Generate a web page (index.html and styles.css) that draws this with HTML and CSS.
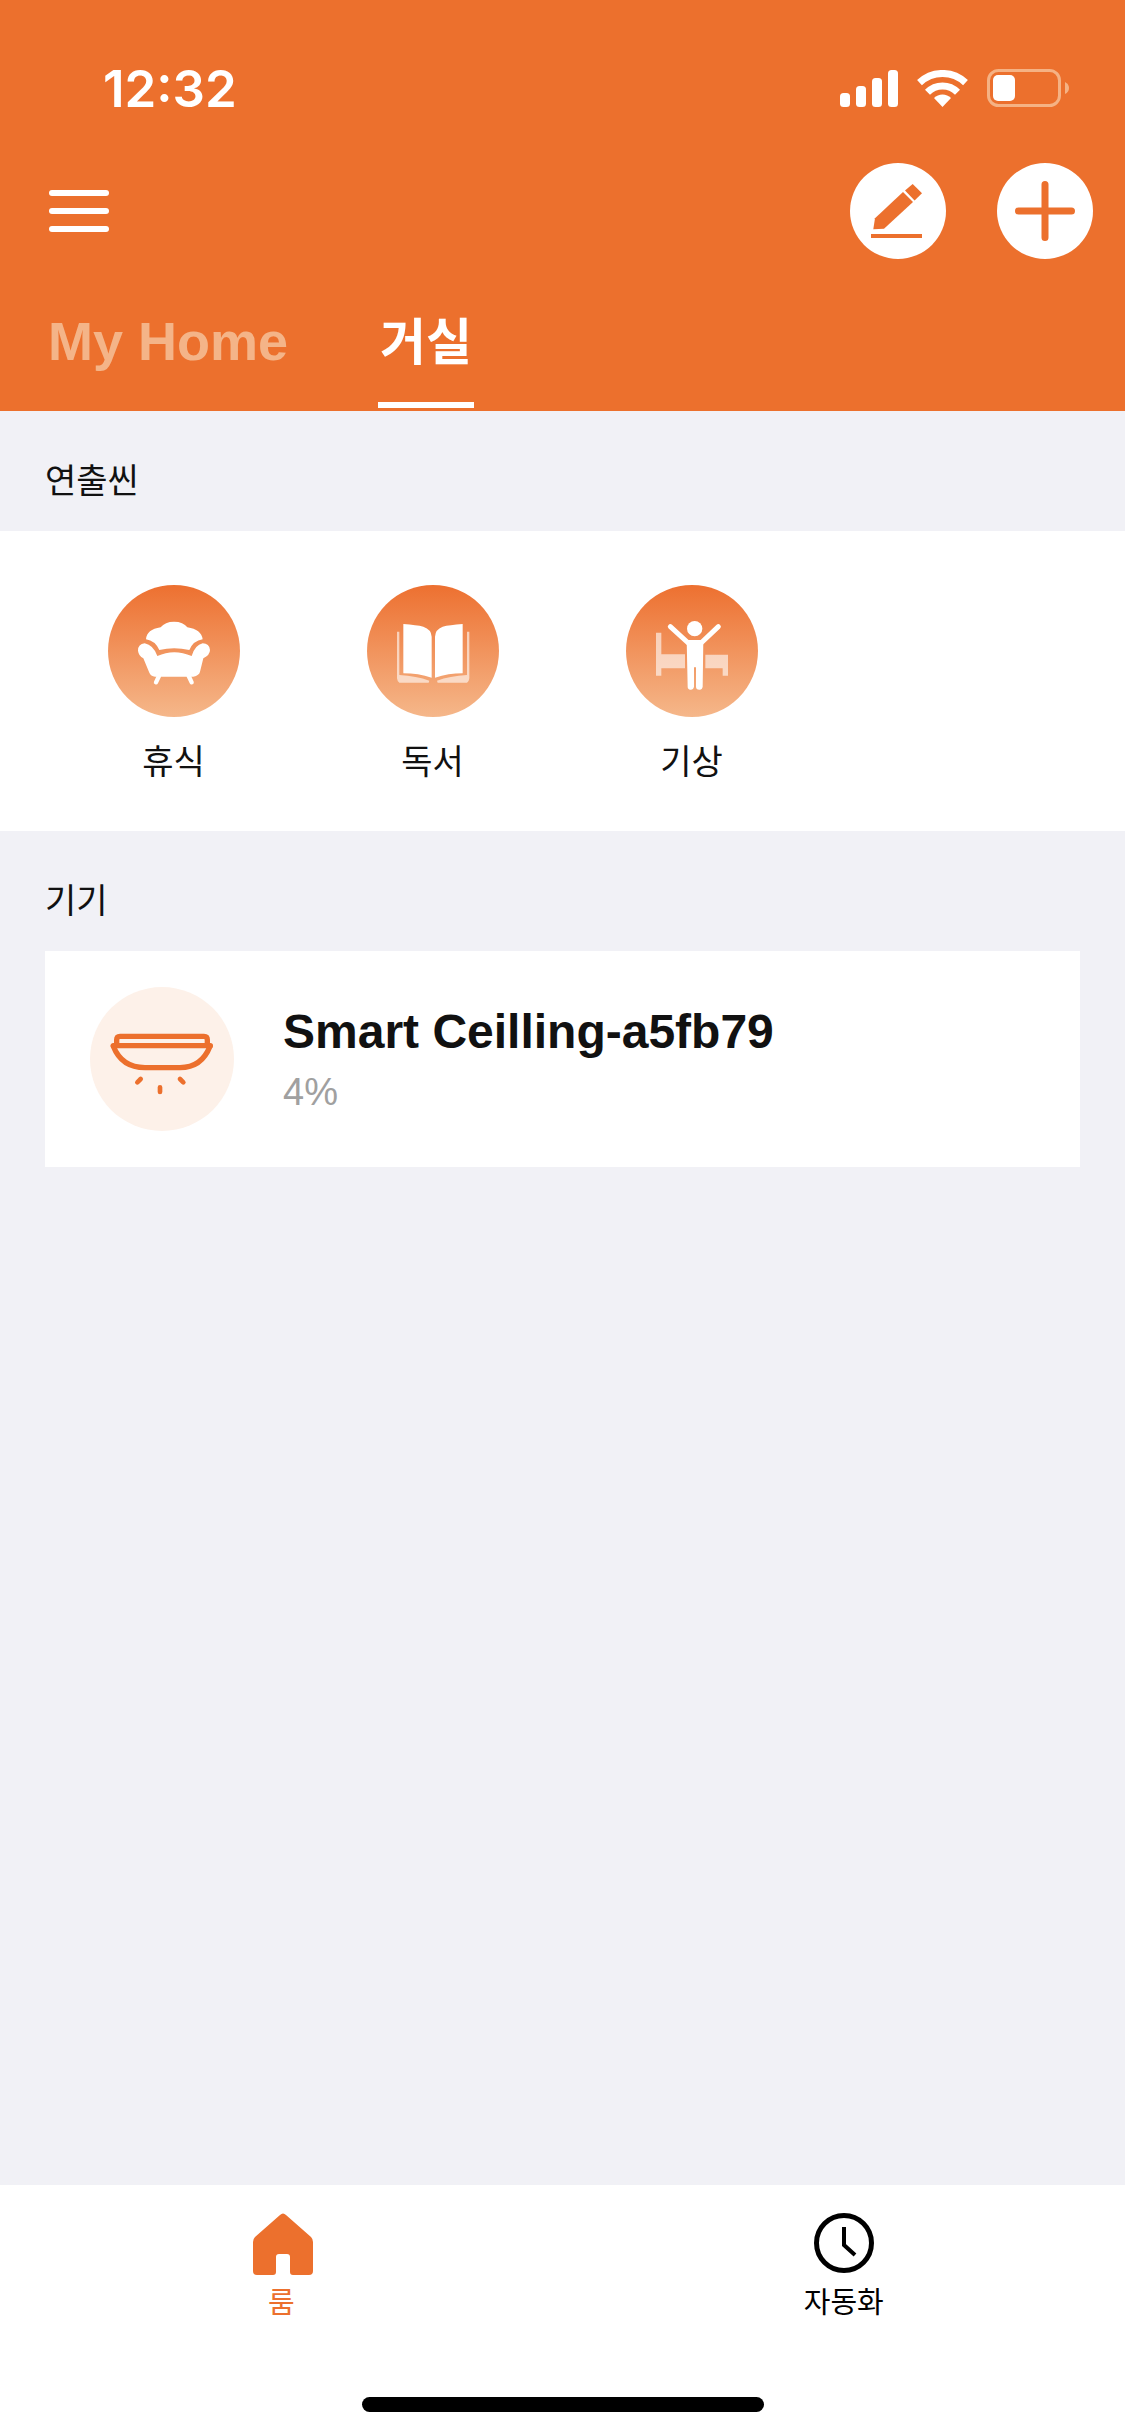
FILE: index.html
```html
<!DOCTYPE html>
<html lang="ko">
<head>
  <meta charset="UTF-8">
  <meta name="viewport" content="width=device-width, initial-scale=1.0">
  <title>거실</title>
  <link rel="stylesheet" href="styles.css">
</head>
<body>

  <div class="page">
    <header class="header">
      <div class="status">
        <span class="time">12:32</span>
        <div class="status-icons">
          <svg width="58" height="37" viewBox="0 0 58 37" fill="#fff">
            <rect x="0" y="23" width="10" height="14" rx="3.5"/>
            <rect x="16" y="16" width="10" height="21" rx="3.5"/>
            <rect x="32" y="8" width="10" height="29" rx="3.5"/>
            <rect x="48" y="0" width="10" height="37" rx="3.5"/>
          </svg>
          <svg width="51" height="37" viewBox="0 0 51 37">
            <path d="M2.5 12.6A33.5 33.5 0 0 1 48.5 12.6" fill="none" stroke="#fff" stroke-width="7"/>
            <path d="M10.5 22.3A21 21 0 0 1 40.5 22.3" fill="none" stroke="#fff" stroke-width="7"/>
            <path d="M25.5 37L17 28A12 12 0 0 1 34 28Z" fill="#fff"/>
          </svg>
          <svg width="82" height="38" viewBox="0 0 82 38">
            <rect x="1.5" y="1.5" width="71" height="35" rx="10" fill="none" stroke="#f5b284" stroke-width="3"/>
            <rect x="6" y="6" width="22" height="26" rx="5" fill="#fff"/>
            <path d="M78 13Q82 15 82 19Q82 23 78 25Z" fill="#f5b284"/>
          </svg>
        </div>
      </div>

      <div class="toolbar">
        <div class="menu">
          <span></span>
          <span></span>
          <span></span>
        </div>
        <div class="actions">
          <div class="round-btn">
            <svg width="96" height="96" viewBox="0 0 96 96" fill="#ec702d">
              <path d="M23.3 66.3L25 55.3L53 29L63 39L34 65.7Z"/>
              <path d="M55 27.5L62.7 21L72 30.3L64.6 37.5Z"/>
              <rect x="21" y="71" width="51" height="4"/>
            </svg>
          </div>
          <div class="round-btn">
            <svg width="96" height="96" viewBox="0 0 96 96" stroke="#ec702d" stroke-width="7" stroke-linecap="round">
              <path d="M48 21.5V74.5M21.5 48H74.5"/>
            </svg>
          </div>
        </div>
      </div>

      <nav class="tabs">
        <a class="tab">My Home</a>
        <a class="tab active">거실</a>
      </nav>
    </header>

    <main class="content">
      <h2 class="section-title">연출씬</h2>
      <section class="scenes">
        <div class="scene">
          <div class="scene-icon">
            <svg width="132" height="132" viewBox="24 15 396 396">
              <path fill="#fff" d="M138 178Q140 148 182 142Q195 125 222 125Q250 125 262 142Q304 148 308 178Q280 182 268 210Q222 200 178 210Q165 182 138 178Z"/>
              <path fill="#fff" d="M134 190Q114 192 114 212Q116 228 130 235L148 278Q152 288 165 290L280 290Q298 286 300 275L310 235Q330 225 330 210Q328 190 308 190Q285 195 275 228Q222 205 172 228Q160 195 134 190Z"/>
              <path fill="none" stroke="#fff" stroke-width="13" stroke-linecap="round" d="M177 288L168 307M266 288L275 307"/>
            </svg>
          </div>
          <span class="scene-name">휴식</span>
        </div>
        <div class="scene">
          <div class="scene-icon">
            <svg width="132" height="132" viewBox="21 15 396 396" fill="#fff">
              <path d="M130 132Q170 135 190 140Q214 148 215 170L215 293Q175 280 130 280Z"/>
              <path d="M308 132Q268 135 248 140Q226 148 225 170L225 293Q265 280 308 280Z"/>
              <path opacity="0.6" d="M111 155H118V285Q170 288 208 302L206 308H118Q112 305 111 295Z"/>
              <path opacity="0.6" d="M328 155H321V285Q269 288 231 302L233 308H321Q327 305 328 295Z"/>
            </svg>
          </div>
          <span class="scene-name">독서</span>
        </div>
        <div class="scene">
          <div class="scene-icon">
            <svg width="132" height="132" viewBox="18 15 396 396" fill="#fff">
              <path opacity="0.6" d="M108 158H124V223H195V265H124V287H108Z"/>
              <path opacity="0.6" d="M256 224H324V287H308V265H256Z"/>
              <circle cx="224" cy="146" r="23"/>
              <path fill="none" stroke="#fff" stroke-width="15" stroke-linecap="round" d="M151 140L208 192M295 140L240 192"/>
              <path d="M200 180H250L248 320Q246 330 238 329Q228 329 228 320V262H222V320Q220 330 211 329Q203 328 203 320Z"/>
            </svg>
          </div>
          <span class="scene-name">기상</span>
        </div>
      </section>

      <h2 class="section-title">기기</h2>
      <section class="device">
        <div class="device-icon">
          <svg width="144" height="144" viewBox="30 20 432 432" fill="none" stroke="#ec702d" stroke-linecap="round">
            <path stroke-width="16" d="M110 195V178Q110 168 120 168H372Q382 168 382 178V195"/>
            <path stroke-width="16" d="M100 196H391"/>
            <path stroke-width="16" d="M100 198Q125 262 195 262H300Q365 262 390 198"/>
            <path stroke-width="14" d="M172 306L182 296M300 296L310 306M240 321V335"/>
          </svg>
        </div>
        <div class="device-info">
          <div class="device-name">Smart Ceilling-a5fb79</div>
          <div class="device-value">4%</div>
        </div>
      </section>
    </main>

    <footer class="tabbar">
      <div class="tabbar-items">
        <div class="tabbar-item selected">
          <svg class="home-icon" width="60" height="62" viewBox="0 0 60 62" fill="#ec702d">
            <path d="M27 2Q30 -1 33 2L58 24Q60 26 60 29V58Q60 62 56 62H40Q37 62 37 59V44Q37 41 34 41H26Q23 41 23 44V59Q23 62 20 62H4Q0 62 0 58V29Q0 26 2 24Z"/>
          </svg>
          <span>룸</span>
        </div>
        <div class="tabbar-item">
          <svg width="60" height="60" viewBox="0 0 60 60" fill="none" stroke="#000">
            <circle cx="30" cy="30" r="27.5" stroke-width="5"/>
            <path stroke-width="4" d="M30 14V32L41 42"/>
          </svg>
          <span>자동화</span>
        </div>
      </div>
      <div class="home-bar"></div>
    </footer>
  </div>

</body>
</html>
```

FILE: styles.css
```css
* {
  box-sizing: border-box;
}
body {
  margin: 0;
  font-family: "Liberation Sans", "Noto Sans CJK KR", sans-serif;
  color: #111;
}
.page {
  width: 1125px;
  height: 2436px;
  display: flex;
  flex-direction: column;
  background-color: #f1f1f6;
}

/* header */
.header {
  height: 411px;
  padding-top: 60px;
  display: flex;
  flex-direction: column;
  background-color: #ec702d;
}
.status {
  height: 56px;
  padding: 0 56px 0 103px;
  display: flex;
  align-items: center;
  justify-content: space-between;
}
.time {
  font-family: Inter, sans-serif;
  font-size: 51px;
  font-weight: 600;
  color: #fff;
}
.status-icons {
  display: flex;
  align-items: center;
  gap: 19px;
}
.toolbar {
  height: 96px;
  margin-top: 47px;
  padding: 0 32px 0 49px;
  display: flex;
  align-items: center;
  justify-content: space-between;
}
.menu {
  width: 60px;
  display: flex;
  flex-direction: column;
  gap: 12px;
}
.menu span {
  height: 6px;
  border-radius: 3px;
  background-color: #fff;
}
.actions {
  display: flex;
  gap: 51px;
}
.round-btn {
  width: 96px;
  height: 96px;
  border-radius: 50%;
  background-color: #fff;
}
.round-btn svg {
  display: block;
}
.tabs {
  margin-top: auto;
  padding: 0 0 3px 48px;
  display: flex;
  gap: 90px;
}
.tab {
  height: 94px;
  font-size: 54px;
  font-weight: 700;
  line-height: 55px;
  color: #f4b488;
}
.tab.active {
  width: 96px;
  text-align: center;
  font-size: 50px;
  line-height: 58px;
  color: #fff;
  border-bottom: 6px solid #fff;
}

/* content */
.content {
  flex: 1;
}
.section-title {
  height: 120px;
  margin: 0;
  padding: 47px 0 0 45px;
  font-size: 34px;
  font-weight: 400;
  line-height: 46px;
}
.scenes {
  height: 300px;
  padding: 54px 0 0 44px;
  display: flex;
  background-color: #fff;
}
.scene {
  width: 259px;
  display: flex;
  flex-direction: column;
  align-items: center;
}
.scene-icon {
  width: 132px;
  height: 132px;
  border-radius: 50%;
  background: linear-gradient(#ed7030, #f5b78a);
}
.scene-icon svg {
  display: block;
}
.scene-name {
  margin-top: 21px;
  font-size: 34px;
  line-height: 48px;
}
.device {
  height: 216px;
  margin: 0 45px;
  padding-left: 45px;
  display: flex;
  align-items: center;
  background-color: #fff;
}
.device-icon {
  width: 144px;
  height: 144px;
  border-radius: 50%;
  background-color: #fdf1e9;
}
.device-icon svg {
  display: block;
}
.device-info {
  margin-left: 49px;
}
.device-name {
  font-size: 48px;
  font-weight: 700;
  line-height: 56px;
}
.device-value {
  margin-top: 10px;
  font-size: 38px;
  line-height: 44px;
  color: #a0a0a0;
}

/* bottom bar */
.tabbar {
  height: 251px;
  padding: 28px 0 24px;
  display: flex;
  flex-direction: column;
  background-color: #fff;
}
.tabbar-items {
  display: flex;
}
.tabbar-item {
  flex: 1;
  display: flex;
  flex-direction: column;
  align-items: center;
  font-size: 29px;
  line-height: 40px;
  color: #000;
}
.tabbar-item svg {
  display: block;
  margin-bottom: 10px;
}
.tabbar-item .home-icon {
  margin-bottom: 8px;
  margin-left: 3px;
}
.tabbar-item.selected {
  color: #ec702d;
}
.home-bar {
  width: 402px;
  height: 15px;
  margin: auto auto 0;
  border-radius: 8px;
  background-color: #000;
}
```
